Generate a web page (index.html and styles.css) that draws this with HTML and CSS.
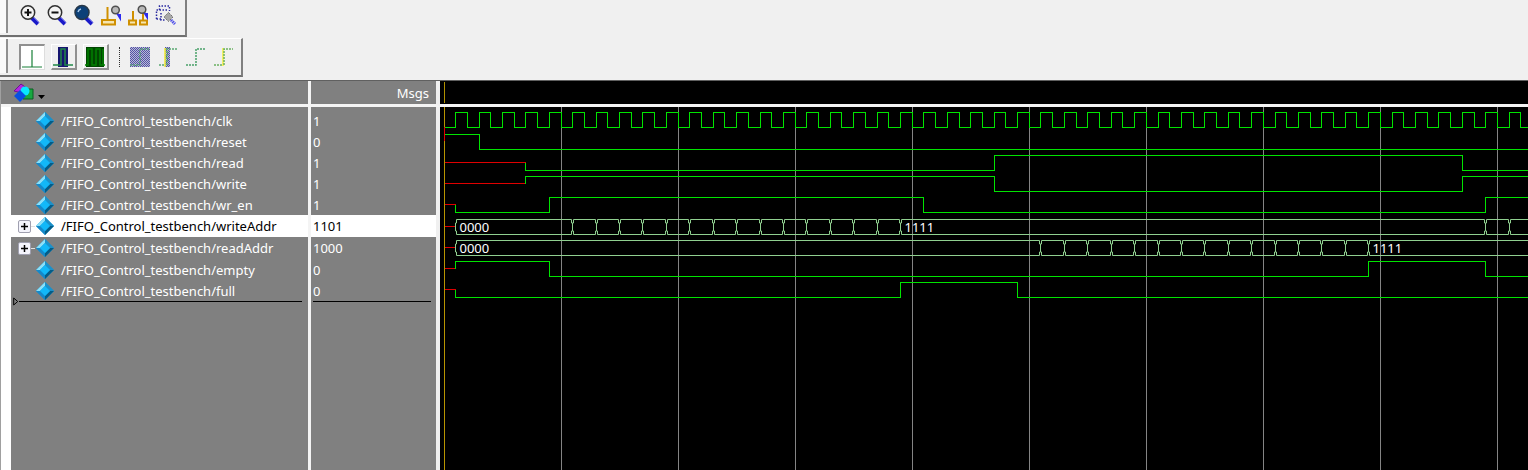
FILE: index.html
```html
<!DOCTYPE html>
<html lang="en">
<head>
<meta charset="utf-8">
<title>Wave</title>
<link rel="stylesheet" href="styles.css">
</head>
<body>
<header class="toolbars">
  <div class="toolbar toolbar-zoom" role="toolbar" aria-label="Zoom">
    <button class="tool" aria-label="Zoom in"><svg width="22" height="22" viewBox="0 0 22 22"><path d="M13 14l6 6" stroke="#1a1ac8" stroke-width="4"/><path d="M14 13l6 6" stroke="#5a5ae8" stroke-width="1"/><circle cx="9" cy="8.500" r="6.700" fill="#f4f4f4" stroke="#303030" stroke-width="1.500"/><path d="M5.500 8.500h7M9 5v7" stroke="#111" stroke-width="2"/></svg></button>
    <button class="tool" aria-label="Zoom out"><svg width="22" height="22" viewBox="0 0 22 22"><path d="M13 14l6 6" stroke="#1a1ac8" stroke-width="4"/><path d="M14 13l6 6" stroke="#5a5ae8" stroke-width="1"/><circle cx="9" cy="8.500" r="6.700" fill="#f4f4f4" stroke="#303030" stroke-width="1.500"/><path d="M5.500 8.500h7" stroke="#111" stroke-width="2"/></svg></button>
    <button class="tool" aria-label="Zoom full"><svg width="22" height="22" viewBox="0 0 22 22"><path d="M13 14l6 6" stroke="#1a1ac8" stroke-width="4"/><path d="M14 13l6 6" stroke="#5a5ae8" stroke-width="1"/><circle cx="9" cy="8.500" r="7" fill="#0c4078" stroke="#283848" stroke-width="1.500"/><path d="M5 8a4 4 0 0 1 3-3" fill="none" stroke="#a8c8e8" stroke-width="1.500"/></svg></button>
    <button class="tool" aria-label="Zoom on active cursor"><svg width="22" height="22" viewBox="0 0 22 22"><path d="M7.500 3v14" stroke="#d09000" stroke-width="2"/><rect x="2" y="16" width="13" height="4.500" fill="#f6e6b0" stroke="#d09000" stroke-width="2"/><path d="M17 9l3 5v-4" stroke="#2a2af0" stroke-width="2" fill="none"/><circle cx="15.500" cy="6" r="3.800" fill="#b8b8b8" stroke="#505050" stroke-width="1.500"/></svg></button>
    <button class="tool" aria-label="Zoom between cursors"><svg width="22" height="22" viewBox="0 0 22 22"><path d="M6 7v10M16 8v9" stroke="#d09000" stroke-width="2"/><rect x="2" y="16.500" width="7" height="4" fill="#f6e6b0" stroke="#d09000" stroke-width="2"/><rect x="13" y="16.500" width="7" height="4" fill="#f6e6b0" stroke="#d09000" stroke-width="2"/><path d="M17 8l3 5v-4" stroke="#2a2af0" stroke-width="2" fill="none"/><circle cx="15" cy="5.500" r="3.800" fill="#b8b8b8" stroke="#505050" stroke-width="1.500"/></svg></button>
    <button class="tool" aria-label="Zoom other window"><svg width="22" height="22" viewBox="0 0 22 22"><path d="M2.500 15v-9h3v-4h10v5M2.500 15h6M5.500 6h8M7 9v7h5" fill="none" stroke="#2828a0" stroke-width="1.500" stroke-dasharray="1.500 1.500"/><path d="M17 16l4 4" stroke="#5050e8" stroke-width="3" stroke-dasharray="1.500 .7"/><path d="M14.500 8.500l4.500 4.500-4.500 4.500L10 13z" fill="#a8a8a8" stroke="#707070" stroke-dasharray="2 1"/></svg></button>
  </div>
  <div class="toolbar toolbar-wave" role="toolbar" aria-label="Wave format">
    <button class="toggle pressed" aria-label="Show drivers"><svg width="22" height="24" viewBox="0 0 22 24"><path d="M11 4v17M1 21h20" stroke="#188038" stroke-width="1.200"/></svg></button>
    <button class="toggle" aria-label="Pulse"><svg width="22" height="24" viewBox="0 0 22 24"><path d="M6 2h10v20H6z" fill="#161670"/><path d="M1 20h8V4h4v16h8" fill="none" stroke="#208848" stroke-width="1.500"/></svg></button>
    <button class="toggle" aria-label="Clock"><svg width="22" height="24" viewBox="0 0 22 24"><path d="M2 2h18v20H2z" fill="#004600"/><path d="M1 20h3V4h4v16h4V4h4v16h5M19 20V4" fill="none" stroke="#008000" stroke-width="1.500"/></svg></button>
    <span class="divider"></span>
    <button class="tool edit" disabled aria-label="Edit wave"><svg width="22" height="24" viewBox="0 0 22 24"><defs><pattern id="mesh" width="2" height="2" patternUnits="userSpaceOnUse"><path d="M0 0h2v2H0z" fill="#b8b8d8"/><path d="M0 0h1v1H0zM1 1h1v1H1z" fill="#5454a4"/></pattern></defs><path d="M1 2h20v20H1z" fill="url(#mesh)"/><path d="M1 20h10V4h10" fill="none" stroke="#58a078" stroke-width="1.500" stroke-dasharray="2 1"/></svg></button>
    <button class="tool edit" disabled aria-label="Insert pulse"><svg width="22" height="24" viewBox="0 0 22 24"><path d="M8 2h5v20H8z" fill="url(#mesh)"/><path d="M8 3v19" stroke="#f0ec30" stroke-width="1.500"/><path d="M2 20h5M10 20V4h10" fill="none" stroke="#58a870" stroke-width="1.500" stroke-dasharray="2 1"/></svg></button>
    <button class="tool edit" disabled aria-label="Invert"><svg width="22" height="24" viewBox="0 0 22 24"><path d="M1 20h10V4h9" fill="none" stroke="#48a068" stroke-width="1.500" stroke-dasharray="2 1"/></svg></button>
    <button class="tool edit" disabled aria-label="Move edge"><svg width="22" height="24" viewBox="0 0 22 24"><path d="M10 3v18" stroke="#f4f038" stroke-width="1.500"/><path d="M1 20h9M11 20V4h9" fill="none" stroke="#68b060" stroke-width="1.500" stroke-dasharray="2 1"/></svg></button>
  </div>
</header>
<svg class="symbols" aria-hidden="true">
  <symbol id="gem" viewBox="0 0 20 20"><path d="M10 1l9 9-9 9-9-9z" fill="#0796dc"/><path d="M10 1L1 10h4l5-5z" fill="#8ce0f8"/><path d="M10 1l9 9h-4l-5-5z" fill="#1c90c8"/><path d="M1 10l9 9v-4l-5-5z" fill="#1688c8"/><path d="M19 10l-9 9v-4l5-5z" fill="#055c86"/><path d="M10 5l5 5-5 5-5-5z" fill="#12b8f8"/></symbol>
</svg>
<main class="wave-window">
  <div class="signal-pane">
    <table class="signals">
      <colgroup><col><col class="value-col"></colgroup>
      <thead><tr>
        <th class="name"><button class="menu" aria-label="Object type"><svg width="34" height="22" viewBox="0 0 34 22"><path d="M13 7h8v10h-10z" fill="#18a840" stroke="#086020"/><path d="M9 2l7 5-6 4-8-2z" fill="#b028e0" stroke="#701090"/><circle cx="13" cy="9" r="4.500" fill="#08e8ff"/><path d="M8 8l6 6-6 6-6-6z" fill="#0850e0"/><path d="M26 13h7l-3.500 4z" fill="#000"/></svg></button></th>
        <th class="value">Msgs</th>
      </tr></thead>
      <tbody>
        <tr><td class="name"><div class="cell"><svg class="gem"><use href="#gem"/></svg>/FIFO_Control_testbench/clk</div></td><td class="value">1</td></tr>
        <tr><td class="name"><div class="cell"><svg class="gem"><use href="#gem"/></svg>/FIFO_Control_testbench/reset</div></td><td class="value">0</td></tr>
        <tr><td class="name"><div class="cell"><svg class="gem"><use href="#gem"/></svg>/FIFO_Control_testbench/read</div></td><td class="value">1</td></tr>
        <tr><td class="name"><div class="cell"><svg class="gem"><use href="#gem"/></svg>/FIFO_Control_testbench/write</div></td><td class="value">1</td></tr>
        <tr><td class="name"><div class="cell"><svg class="gem"><use href="#gem"/></svg>/FIFO_Control_testbench/wr_en</div></td><td class="value">1</td></tr>
        <tr class="bus selected"><td class="name"><div class="cell"><button class="expand" aria-label="Expand writeAddr"><svg width="7" height="7" viewBox="0 0 7 7"><path d="M0 3.500h7M3.500 0v7" stroke="#000" stroke-width="1.500"/></svg></button><span class="branch"></span><svg class="gem"><use href="#gem"/></svg>/FIFO_Control_testbench/writeAddr</div></td><td class="value">1101</td></tr>
        <tr class="bus"><td class="name"><div class="cell"><button class="expand" aria-label="Expand readAddr"><svg width="7" height="7" viewBox="0 0 7 7"><path d="M0 3.500h7M3.500 0v7" stroke="#000" stroke-width="1.500"/></svg></button><span class="branch"></span><svg class="gem"><use href="#gem"/></svg>/FIFO_Control_testbench/readAddr</div></td><td class="value">1000</td></tr>
        <tr><td class="name"><div class="cell"><svg class="gem"><use href="#gem"/></svg>/FIFO_Control_testbench/empty</div></td><td class="value">0</td></tr>
        <tr><td class="name"><div class="cell"><svg class="gem"><use href="#gem"/></svg>/FIFO_Control_testbench/full</div></td><td class="value">0</td></tr>
        <tr class="rest"><td class="name"><div class="insert"><svg width="6" height="9" viewBox="0 0 6 9"><path d="M.7 1v7l4-3.500z" fill="none" stroke="#000"/></svg><span class="rule"></span></div></td><td class="value"><div class="insert"><span class="rule"></span></div></td></tr>
      </tbody>
    </table>
  </div>
  <section class="wave-pane" aria-label="Waveforms">
    <div class="wave-head"></div>
    <svg class="waves" id="waves"></svg>
  </section>
</main>
<script src="waves.js"></script>
</body>
</html>
```
FILE: styles.css
```css
* { box-sizing: border-box; }
body {
  margin: 0;
  height: 100vh;
  display: flex;
  flex-direction: column;
  overflow: hidden;
  background: #f0f0f0;
  font-family: "Noto Sans", sans-serif;
  font-size: 13px;
  line-height: 18px;
}
button { display: block; margin: 0; padding: 0; border: 0; background: none; font: inherit; }
svg { display: block; }
.symbols { position: absolute; width: 0; height: 0; }

.toolbars {
  display: flex;
  flex-direction: column;
  align-items: flex-start;
  gap: 1px;
  padding-bottom: 3px;
}
.toolbar {
  display: flex;
  align-items: center;
  border-right: 2px solid #808080;
  border-bottom: 2px solid #707070;
}
.toolbar::before {
  content: "";
  align-self: stretch;
  width: 6px;
  margin-bottom: 2px;
  background: #fafafa;
  border-right: 2px solid #909090;
}
.toolbar-zoom {
  height: 37px;
  gap: 5px;
  padding-right: 9px;
}
.toolbar-zoom::before { margin-right: 6px; }
.toolbar-zoom .tool { margin-bottom: 6px; }
.toolbar-wave {
  width: 243px;
  height: 39px;
  border-top: 1px solid #fff;
}
.toggle {
  width: 26px;
  height: 26px;
  margin-right: 6px;
  border: solid;
  border-width: 1px 2px 2px 1px;
  border-color: #fff #909090 #909090 #fff;
}
.toolbar-wave .toggle:first-of-type { margin-left: 11px; }
.pressed { background: #fff; border-width: 2px 1px 1px 2px; border-color: #909090 #ddd #ddd #909090; }
.divider { height: 20px; margin: 0 9px 0 4px; border-left: 1px dotted #303030; }
.edit { margin-right: 6px; }

.wave-window {
  flex: 1;
  min-height: 0;
  display: flex;
  border-top: 1px solid #606060;
}
.signal-pane { flex: none; width: 440px; background: #808080; border-left: 1px solid #a0a0a0; }
.signals { width: 100%; height: 100%; border-collapse: separate; border-spacing: 0; table-layout: fixed; color: #fff; }
.value-col { width: 129px; }
th, td { padding: 0; font-weight: normal; text-align: left; vertical-align: middle; white-space: nowrap; }
.name { border-right: 3px solid #f4f4f4; border-left: 10px solid #fff; }
.value { border-right: 4px solid #f0f0f0; padding-left: 2px; }
th { height: 26px; border-bottom: 3px solid #f4f4f4; }
th.name { border-left: 0; padding-left: 11px; }
th.value { padding-right: 7px; text-align: right; }
tbody tr { height: 21px; }
tbody tr:first-child { height: 24px; }
tbody tr:first-child td { padding-top: 3px; }
tbody .bus { height: 22px; }
.cell { display: flex; align-items: center; justify-content: flex-start; padding-left: 24px; }
.gem { width: 20px; height: 20px; margin-right: 6px; flex: none; }
.bus .cell { padding-left: 7px; }
.expand {
  width: 13px;
  height: 13px;
  display: grid;
  place-items: center;
  border: 1px solid #a0a0b0;
  border-radius: 2px;
  background: #f4f4fc;
}
.branch { width: 4px; border-top: 1px solid #e0e0e0; }
.selected td { color: #000; background: #fff; }
tbody tr.rest { height: auto; }
.rest td { vertical-align: top; }
.rest .name { padding: 0 6px 0 2px; }
.rest .value { padding-right: 5px; }
.insert { display: flex; align-items: center; height: 1px; }
.rule { flex: 1; border-top: 1px solid #000; }

.wave-pane { flex: 1; min-width: 0; display: flex; flex-direction: column; background: #000; }
.wave-head { height: 26px; border-bottom: 3px solid #f4f4f4; }
.wave-head::before { content: ""; display: block; width: 1px; height: 21px; margin: 1px 0 0 4px; background: #b09000; }
.waves { flex: 1; min-height: 0; width: 100%; }
.waves path { fill: none; stroke: #00e400; shape-rendering: crispEdges; }
.waves path.unknown { stroke: #e00000; }
.waves path.value-bus { stroke: #90d090; shape-rendering: auto; }
.waves line { stroke: #848484; shape-rendering: crispEdges; }
.waves line.cursor { stroke: #b89400; }
.waves text { fill: #fff; font-size: 13px; }
```
FILE: waves.js
```
const svg = document.getElementById("waves");
const NS = "http://www.w3.org/2000/svg";
const HALF = 11.705;
const END = 2400;
const START = 4;
const px = (t) => Math.floor(START + t * HALF) + 0.5;

function add(tag, attrs, text) {
  const el = document.createElementNS(NS, tag);
  for (const key in attrs) el.setAttribute(key, attrs[key]);
  if (text) el.textContent = text;
  svg.appendChild(el);
}

for (let t = 10; px(t) < END; t += 10) {
  add("line", { x1: px(t), x2: px(t), y1: 0, y2: "100%" });
}

// Times are in half clock periods; each change toggles the level.
function bit(top, from, level, changes) {
  const y = (v) => top + (v ? 0.5 : 15.5);
  if (from) {
    add("path", { class: "unknown", d: `M${px(0)} ${top + 7.5}H${px(from)}` });
  }
  let d = `M${px(from)} ${from ? top + 7.5 : y(level)}V${y(level)}`;
  for (const t of changes) {
    level = !level;
    d += `H${px(t)}V${y(level)}`;
  }
  add("path", { d: d + `H${END}` });
}

function bus(top, changes, labels) {
  add("path", { class: "unknown", d: `M${px(0)} ${top + 7.5}H${px(1)}` });
  let d = "";
  const edges = [1, ...changes];
  edges.forEach((t, i) => {
    const a = px(t);
    const last = i === edges.length - 1;
    const b = last ? END : px(edges[i + 1]);
    d += `M${b - 1} ${top + 0.5}H${a + 1}V${top + 4}H${a}V${top + 12}H${a + 1}V${top + 15.5}H${b - 1}`;
    if (!last) d += `V${top + 12}H${b}M${b - 1} ${top + 0.5}V${top + 4}H${b}`;
  });
  add("path", { class: "value-bus", d });
  for (const [t, text] of labels) add("text", { x: px(t) + 4, y: top + 13 }, text);
}

const every = (from, to) => {
  const out = [];
  for (let t = from; t <= to; t += 2) out.push(t);
  return out;
};

bit(5, 0, false, every(1, 199).flatMap((t) => [t, t + 1]));
bit(27, 0, true, [3]);
bit(48, 7, false, [47, 87]);
bit(69, 7, true, [47, 87]);
bit(90, 1, false, [9, 41, 89]);
bus(112, [...every(11, 39), ...every(89, 117)], [[1, "0000"], [39, "1111"]]);
bus(133, every(51, 79), [[1, "0000"], [79, "1111"]]);
bit(154, 1, true, [9, 79, 89]);
bit(175, 1, false, [39, 49]);

add("line", { class: "cursor", x1: px(0), x2: px(0), y1: 0, y2: "100%" });
add("path", { class: "unknown", d: `M${px(0)} 20V34` });
```
